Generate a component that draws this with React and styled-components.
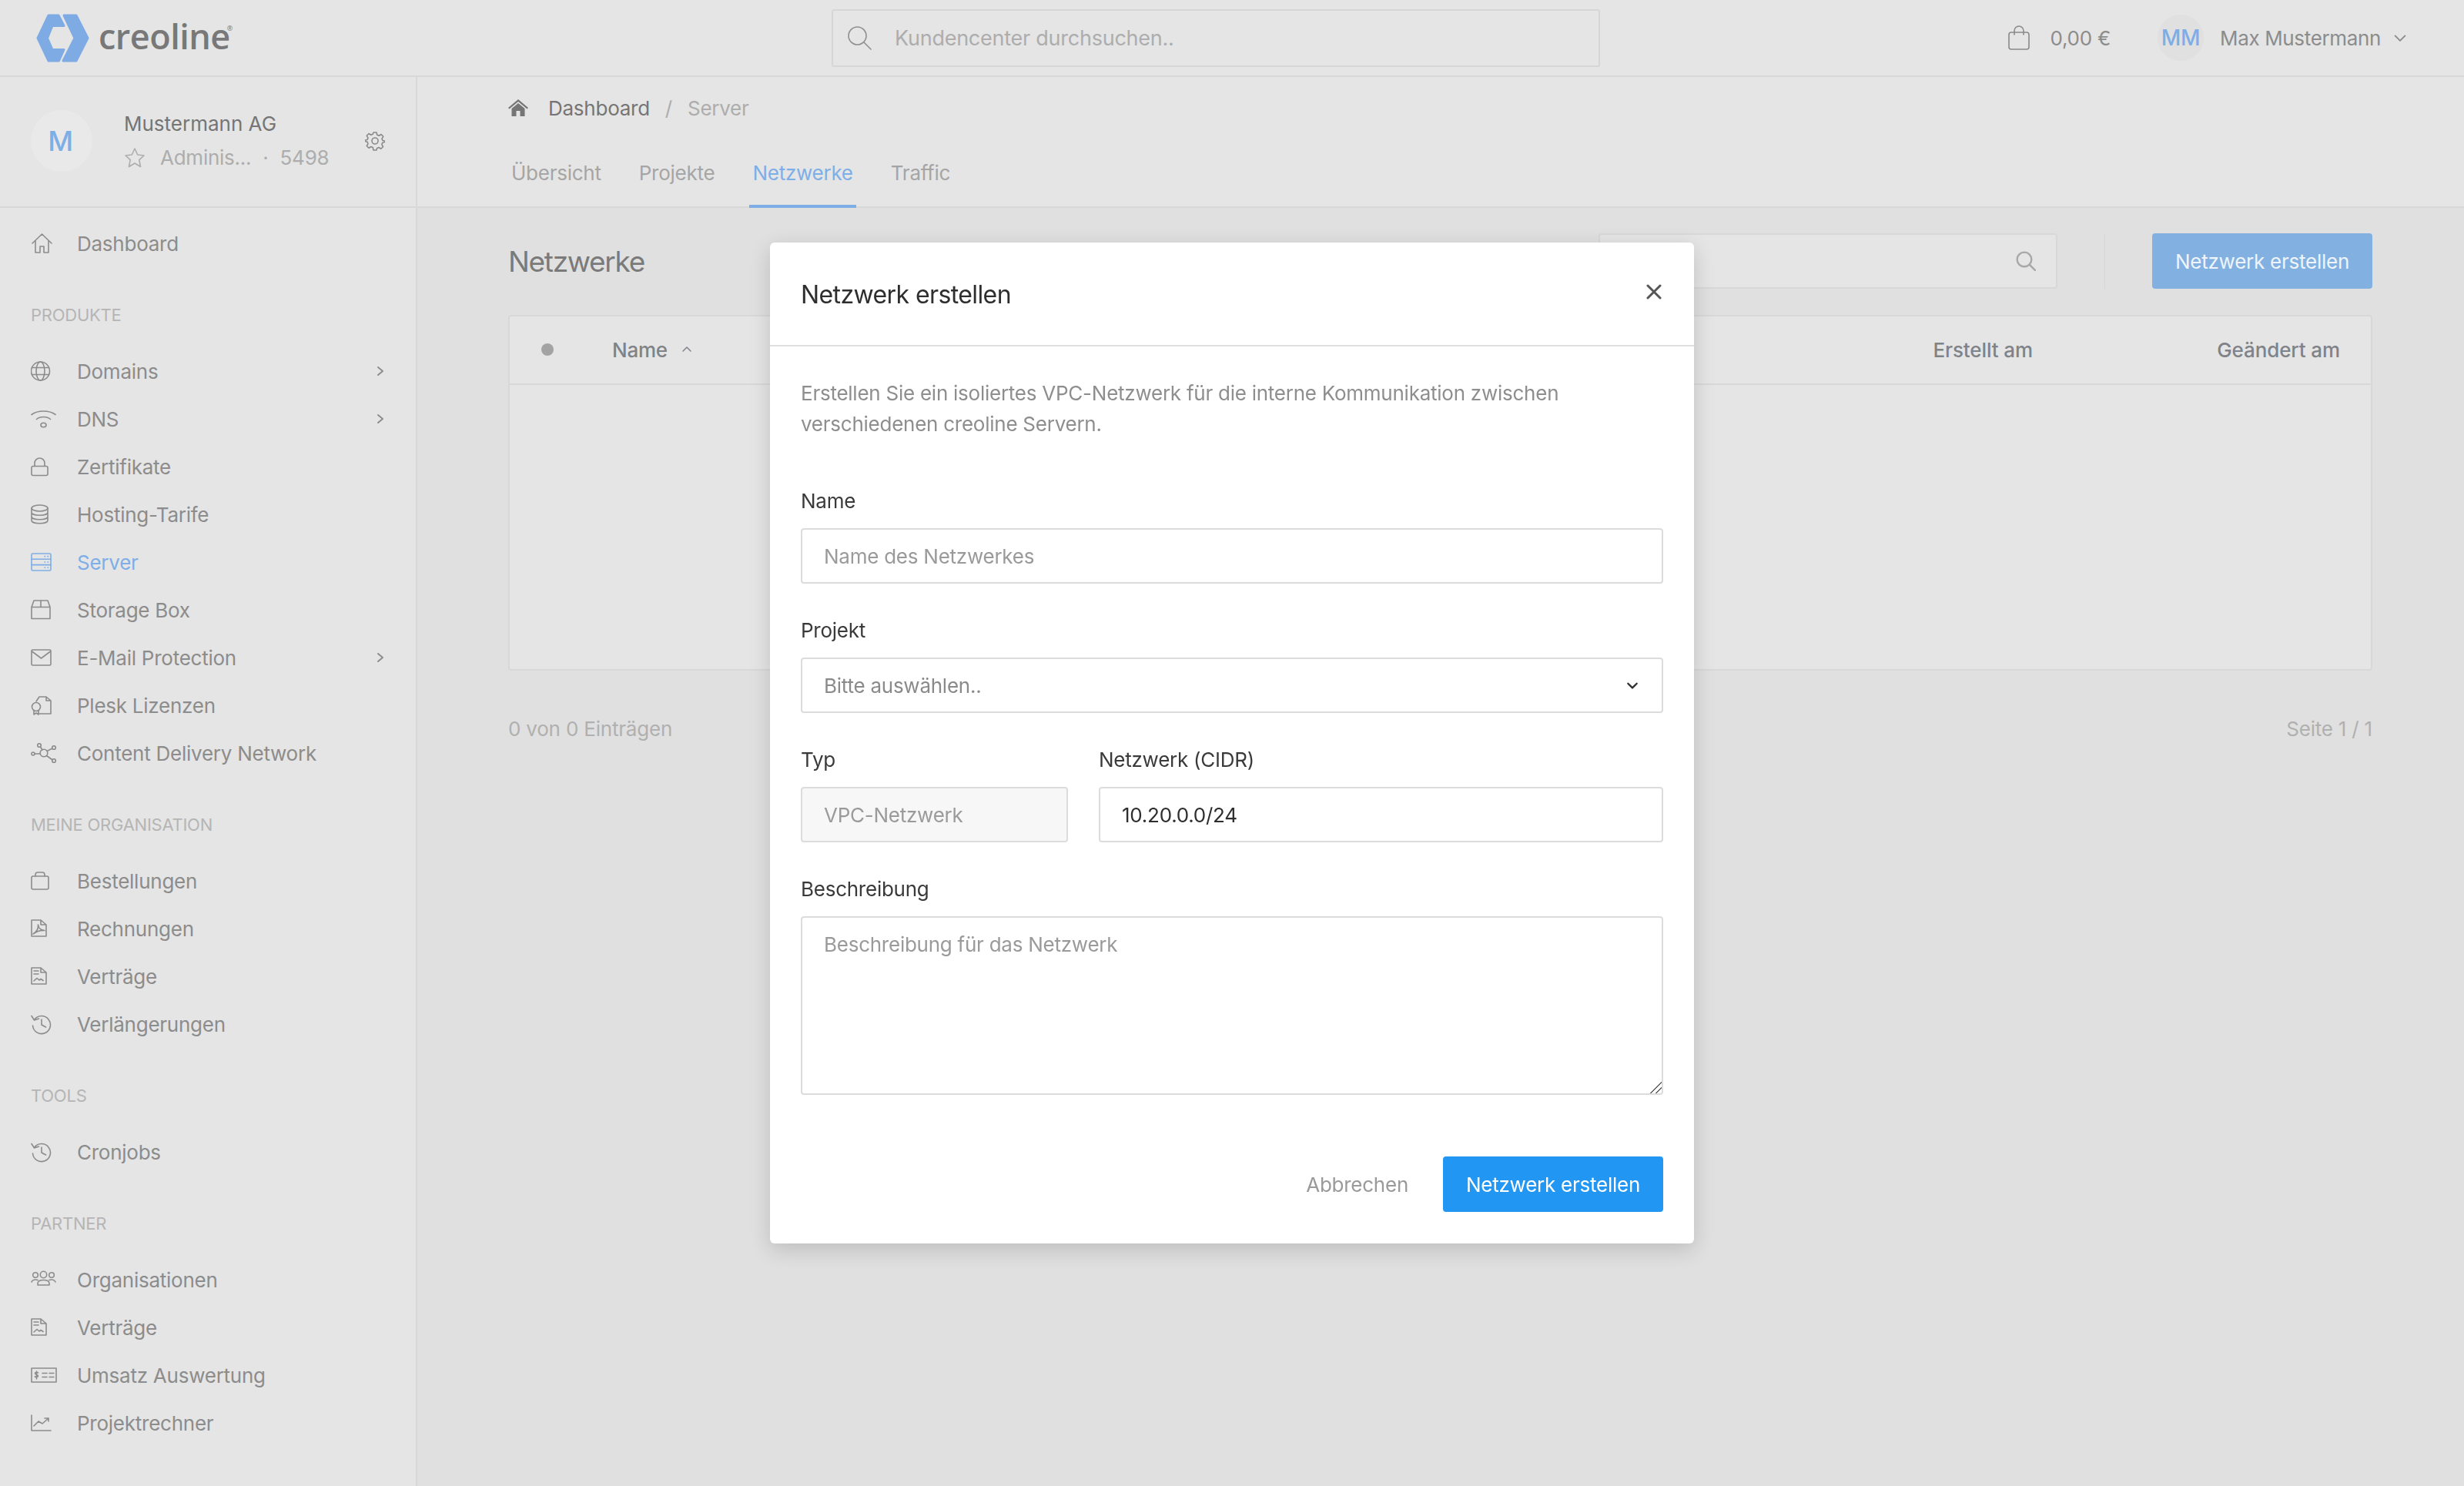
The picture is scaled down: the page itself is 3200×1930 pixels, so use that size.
import React from "react";
import styled, { createGlobalStyle } from "styled-components";

const GlobalStyle = createGlobalStyle`
  * { box-sizing: border-box; }
  html, body { margin: 0; height: 100%; }
  body {
    font-family: Inter, "Liberation Sans", sans-serif;
    font-size: 26px;
    letter-spacing: -0.25px;
    color: #8a8a8a;
    background: #e0e0e0;
    overflow: hidden;
  }
`;

const Page = styled.div`
  height: 100vh;
  display: flex;
  flex-direction: column;
`;

/* top bar */
const TopBar = styled.header`
  height: 100px;
  flex: none;
  display: flex;
  align-items: center;
  background: #e5e5e5;
  border-bottom: 2px solid #d8d8d8;
  padding-right: 74px;
`;
const Brand = styled.div`
  width: 1080px;
  flex: none;
  display: flex;
  align-items: center;
  gap: 12px;
  padding-left: 47px;
`;
const BrandName = styled.span`
  font-family: "Open Sans", sans-serif;
  font-weight: 600;
  font-size: 45px;
  line-height: 60px;
  margin-bottom: 5px;
  color: #787878;
  letter-spacing: -0.5px;
  sup {
    font-size: 9px;
    font-weight: 400;
    vertical-align: 24px;
    line-height: 0;
    margin-left: -4px;
  }
`;
const GlobalSearch = styled.div`
  width: 998px;
  height: 75px;
  display: flex;
  align-items: center;
  gap: 30px;
  padding-left: 18px;
  color: #8f8f8f;
  border: 2px solid #d6d6d6;
  border-radius: 3px;
`;
const Muted = styled.span`
  color: #adadad;
  font-size: 27px;
  margin-top: 1px;
`;
const TopRight = styled.div`
  margin-left: auto;
  display: flex;
  align-items: center;
`;
const Amount = styled.span`
  margin-left: 26px;
  margin-right: 61px;
  color: #8c8c8c;
`;
const UserBadge = styled.div`
  width: 60px;
  height: 60px;
  border-radius: 50%;
  background: #e0e0e0;
  color: #7eaee6;
  display: flex;
  align-items: center;
  justify-content: center;
  font-weight: 500;
  font-size: 28px;
`;
const UserName = styled.span`
  margin: 0 16px 0 21px;
  color: #8c8c8c;
  letter-spacing: -0.35px;
`;

/* layout below the bar */
const Body = styled.div`
  flex: 1;
  display: flex;
  min-height: 0;
`;
const Sidebar = styled.aside`
  width: 542px;
  flex: none;
  background: #e5e5e5;
  border-right: 2px solid #d8d8d8;
`;
const Account = styled.div`
  height: 170px;
  display: flex;
  align-items: center;
  padding: 0 40px 2px;
  border-bottom: 2px solid #d8d8d8;
`;
const Avatar = styled.div`
  width: 80px;
  height: 80px;
  flex: none;
  border-radius: 50%;
  background: #e9e9e9;
  color: #7eaee6;
  display: flex;
  align-items: center;
  justify-content: center;
  font-size: 36px;
  font-weight: 500;
  padding-right: 3px;
`;
const AccountText = styled.div`
  margin-left: 41px;
  flex: 1;
  display: flex;
  flex-direction: column;
  gap: 12px;
`;
const AccountName = styled.div`
  color: #757575;
  line-height: 32px;
  letter-spacing: 0;
`;
const AccountMeta = styled.div`
  display: flex;
  align-items: center;
  color: #adadad;
  line-height: 32px;
  gap: 15px;
  svg { margin-right: 4px; }
`;
const Nav = styled.nav`
  padding-top: 15px;
`;
const SectionLabel = styled.div`
  margin: 50px 0 30px 40px;
  font-size: 22px;
  line-height: 24px;
  color: #b5b5b5;
`;
const NavRow = styled.div`
  height: 62px;
  display: flex;
  align-items: center;
  padding: 0 40px;
  color: ${(p) => (p.$active ? "#7eaee6" : "#8c8c8c")};
`;
const NavIcon = styled.span`
  width: 60px;
  flex: none;
  display: flex;
`;
const NavText = styled.span`
  flex: 1;
`;

const Main = styled.main`
  flex: 1;
  min-width: 0;
`;
const MainHead = styled.div`
  height: 170px;
  background: #e5e5e5;
  border-bottom: 2px solid #d8d8d8;
  padding: 22px 0 0 118px;
`;
const Breadcrumb = styled.div`
  height: 36px;
  display: flex;
  align-items: center;
  color: #757575;
`;
const Crumb = styled.span`
  color: ${(p) => (p.$current ? "#adadad" : "#757575")};
  margin-left: ${(p) => p.$gap}px;
`;
const Tabs = styled.div`
  display: flex;
  gap: 41px;
  margin-top: 24px;
  height: 88px;
`;
const Tab = styled.div`
  height: 88px;
  padding: 0 4px;
  line-height: 86px;
  color: ${(p) => (p.$active ? "#7eaee6" : "#a5a5a5")};
  border-bottom: 4px solid ${(p) => (p.$active ? "#7eaee6" : "transparent")};
`;
const Content = styled.div`
  padding: 33px 119px 0 118px;
`;
const Toolbar = styled.div`
  height: 72px;
  display: flex;
  align-items: center;
`;
const Title = styled.h1`
  flex: 1;
  margin: 0;
  font-size: 37px;
  letter-spacing: -1.3px;
  font-weight: 400;
  color: #7a7a7a;
`;
const TableSearch = styled.div`
  width: 596px;
  height: 72px;
  display: flex;
  align-items: center;
  justify-content: flex-end;
  padding-right: 26px;
  color: #a8a8a8;
  background: #e5e5e5;
  border: 2px solid #d8d8d8;
  border-radius: 4px;
`;
const VLine = styled.div`
  width: 1px;
  height: 72px;
  margin: 0 61px;
  background: #d6d6d6;
`;
const GhostButton = styled.div`
  width: 286px;
  height: 72px;
  display: flex;
  align-items: center;
  justify-content: center;
  border-radius: 4px;
  background: #82b1e1;
  color: #eef4fa;
`;
const Table = styled.div`
  margin-top: 34px;
  height: 462px;
  background: #e5e5e5;
  border: 2px solid #d8d8d8;
  border-radius: 4px;
`;
const TableHead = styled.div`
  height: 90px;
  display: grid;
  grid-template-columns: 92px 1fr 280px 399px;
  align-items: center;
  padding: 0 40px 0 41px;
  border-bottom: 2px solid #d8d8d8;
  color: #7f8388;
  font-weight: 500;
  margin-top: -1px;
`;
const Dot = styled.div`
  width: 16px;
  height: 16px;
  border-radius: 50%;
  background: #a3a3a3;
`;
const NameCell = styled.div`
  display: flex;
  align-items: center;
  gap: 18px;
`;
const RightCell = styled.div`
  text-align: right;
  letter-spacing: -0.1px;
`;
const TableFoot = styled.div`
  display: flex;
  justify-content: space-between;
  margin-top: 60px;
  line-height: 32px;
  color: #b0b0b0;
  letter-spacing: -0.2px;
`;

/* dialog */
const Overlay = styled.div`
  position: fixed;
  inset: 0;
  display: flex;
  align-items: center;
  justify-content: center;
`;
const Dialog = styled.div`
  width: 1200px;
  height: 1300px;
  background: #fff;
  border-radius: 6px;
  box-shadow: 0 8px 28px rgba(0, 0, 0, 0.16);
  color: #2e2e2e;
`;
const DialogHead = styled.div`
  height: 135px;
  display: flex;
  justify-content: space-between;
  padding: 0 40px 0 40px;
  border-bottom: 2px solid #dedede;
`;
const DialogTitle = styled.h2`
  margin: 48px 0 0;
  font-size: 32px;
  letter-spacing: -0.6px;
  line-height: 40px;
  font-weight: 400;
  color: #2e2e2e;
`;
const Close = styled.span`
  display: flex;
  margin-top: 54px;
  margin-right: 2px;
  color: #555;
`;
const DialogBody = styled.div`
  padding: 41px 40px 0;
`;
const Intro = styled.p`
  margin: 0 0 64px;
  line-height: 40px;
  color: #8e8e8e;
`;
const Field = styled.div`
  margin-bottom: 45px;
  flex: ${(p) => p.$flex || "none"};
  width: ${(p) => (p.$width ? `${p.$width}px` : "auto")};
`;
const Label = styled.label`
  display: block;
  line-height: 32px;
  margin-bottom: 19px;
  color: #3a3a3a;
`;
const inputCss = `
  display: block;
  width: 100%;
  font: inherit;
  letter-spacing: inherit;
  outline: none;
  padding: 0 28px;
  border: 2px solid #dcdcdc;
  border-radius: 4px;
  color: #2e2e2e;
  background: #fff;
  &::placeholder { color: #9a9a9a; opacity: 1; }
`;
const TextInput = styled.input`
  ${inputCss}
  height: 72px;
  &:disabled { background: #f7f7f7; color: #9a9a9a; -webkit-text-fill-color: #9a9a9a; opacity: 1; }
`;
const SelectBox = styled.div`
  height: 72px;
  display: flex;
  align-items: center;
  justify-content: space-between;
  padding: 0 30px 0 28px;
  border: 2px solid #dcdcdc;
  border-radius: 4px;
  color: #8a8a8a;
`;
const SelectArrow = styled.span`
  display: flex;
  color: #2e2e2e;
`;
const TwoCols = styled.div`
  display: flex;
  gap: 40px;
`;
const TextArea = styled.textarea`
  ${inputCss}
  height: 232px;
  padding: 19px 28px;
  line-height: 32px;
  resize: vertical;
  &::-webkit-resizer {
    background: linear-gradient(135deg, transparent 48%, #666 48%, #666 54%, transparent 54%, transparent 72%, #666 72%, #666 78%, transparent 78%);
  }
`;
const DialogFoot = styled.div`
  display: flex;
  justify-content: flex-end;
  align-items: center;
  gap: 45px;
  margin-top: 80px;
`;
const CancelLink = styled.span`
  color: #9a9a9a;
`;
const PrimaryButton = styled.button`
  width: 286px;
  height: 72px;
  border: none;
  border-radius: 4px;
  font: inherit;
  letter-spacing: inherit;
  background: #2196f3;
  color: #fff;
`;

/* icons */
const Glyph = styled.svg`
  display: block;
  fill: none;
  stroke: currentColor;
  stroke-width: ${(p) => p.$sw || 1.6};
  stroke-linecap: round;
  stroke-linejoin: round;
`;
const Ico = ({ children, w = 34, h = 28, sw, vb }) => (
  <Glyph width={w} height={h} viewBox={vb || `0 0 ${w} ${h}`} $sw={sw}>
    {children}
  </Glyph>
);

const HomeIcon = () => <Ico><path d="M2 14 14.5 2 27 14M6 10.5V26h6v-8h5v8h6V10.5" /></Ico>;
const GlobeIcon = () => <Ico><circle cx="12.5" cy="14" r="12" /><ellipse cx="12.5" cy="14" rx="5.5" ry="12" /><path d="M1.5 9.5h22M1.5 18.5h22" /></Ico>;
const WifiIcon = () => <Ico><path d="M1 8.500C9 2.500 24 2.500 32 8.500M7.500 14.500C12 10.500 21 10.500 25.500 14.500" /><ellipse cx="16.500" cy="22" rx="3.500" ry="2.800" /></Ico>;
const LockIcon = () => <Ico><rect x="1" y="13.500" width="21" height="12" rx="2" /><path d="M5 13.500V9.500a6.500 6.500 0 0 1 13 0v4" /></Ico>;
const DbIcon = () => <Ico><ellipse cx="11.500" cy="6" rx="10.500" ry="4" /><path d="M1 6v16c0 5 21 5 21 0V6M1 11.500c0 5 21 5 21 0M1 17c0 5 21 5 21 0" /></Ico>;
const ServerIcon = () => <Ico><rect x="1" y="3" width="25" height="22" rx="1.500" /><path d="M1 10.300h25M1 17.600h25M18 6.600h.6M22 6.600h.6M18 14h.6M22 14h.6M18 21.300h.6M22 21.300h.6" /></Ico>;
const BoxIcon = () => <Ico><path d="M1 10.500 4 2h18l3 8.500V25.500H1zM1 10.500h24M13 2v8.500" /></Ico>;
const MailIcon = () => <Ico><rect x="1" y="4" width="25" height="20" rx="1.500" /><path d="M1.500 6 13.500 15 25.500 6" /></Ico>;
const PleskIcon = () => <Ico><path d="M7 9 11 3h9l6 5v17H10M20 3v5h6" /><circle cx="7" cy="16" r="5.500" /><path d="M4 21v5l3-2 3 2v-5" /></Ico>;
const CdnIcon = () => (
  <Ico>
    <circle cx="17" cy="14" r="4.800" /><circle cx="11" cy="4" r="2.300" /><circle cx="30" cy="7" r="2.300" />
    <circle cx="3" cy="15" r="2" /><circle cx="30" cy="24" r="2.300" />
    <path d="M12.500 6 15 10M21 11.500 28 8M5 15h7M20.500 17.500 28.200 23" />
  </Ico>
);
const BagIcon = () => <Ico><rect x="1" y="8" width="22" height="17" rx="2" /><path d="M6 8V6a3 3 0 0 1 3-3h6a3 3 0 0 1 3 3v2" /></Ico>;
const PdfIcon = () => <Ico><path d="M1 3h12l7 6v15H1zM13 3v6h7" /><path d="M3 21c5-3 7-8 6.500-12 .5 4 3.500 7 8.500 7.500-5-.5-10 1-15 4.500z" /></Ico>;
const DocIcon = () => <Ico><path d="M1 3h12l7 6v15H1zM13 3v6h7M4 7h6M4 11h6M4 20l4-3.500 3 2.500 2-1.500 3 2" /></Ico>;
const HistoryIcon = () => <Ico><path d="M4.500 8.500a11.500 11.500 0 1 1-2 7.500M1 3.500l3.500 5.500 6-2M14 8v7l5.500 3" /></Ico>;
const TeamIcon = () => (
  <Ico>
    <circle cx="6" cy="8" r="3.300" /><circle cx="16.500" cy="7.500" r="4.200" /><circle cx="27" cy="8" r="3.300" />
    <path d="M1 17c1-3 5-3.500 8-2.500M32 17c-1-3-5-3.500-8-2.500M9 21v-2c0-3 3-4.500 7.500-4.500S24 16 24 19v2z" />
  </Ico>
);
const BillIcon = () => (
  <Ico>
    <rect x="1" y="5" width="32" height="18" />
    <path d="M15 11.500h6M24 11.500h6M15 16.500h6M24 16.500h6M9.500 11c-1-1-4-1-4 .8s4 1.400 4 3.200-3 1.800-4.200.8M7.500 9v10" />
  </Ico>
);
const ChartIcon = () => <Ico><path d="M1 4v20h25M4 18l6-6 5 3 8-7M18 8h5v4" /></Ico>;

const Chevron = ({ dir = "right", size = 14, sw = 2 }) => {
  const d = { right: "M5 2l6 5-6 5", down: "M2 5l5 5 5-5", up: "M2 9l5-5 5 5" }[dir];
  return <Ico w={size} h={size} vb="0 0 14 14" sw={sw}><path d={d} /></Ico>;
};
const SearchIcon = ({ size = 32, sw = 1.6 }) => (
  <Ico w={size} h={size} vb="0 0 32 32" sw={sw}><circle cx="13.500" cy="13.500" r="11.500" /><path d="M22 22l9 9" /></Ico>
);

const Logo = () => (
  <svg width="69" height="63" viewBox="0 0 69 63" fill="#7fabe4" stroke="#7fabe4" strokeWidth="3" strokeLinejoin="round">
    <path d="M16 2h13l7 13.500H21L14.500 31.500 21 46.500h15L29.500 61H16L2 31.500z" />
    <path d="M36 2h16l15 29.500L52 61H35l15-29.500z" />
  </svg>
);

const productItems = [
  [GlobeIcon, "Domains", true],
  [WifiIcon, "DNS", true],
  [LockIcon, "Zertifikate"],
  [DbIcon, "Hosting-Tarife"],
  [ServerIcon, "Server", false, true],
  [BoxIcon, "Storage Box"],
  [MailIcon, "E-Mail Protection", true],
  [PleskIcon, "Plesk Lizenzen"],
  [CdnIcon, "Content Delivery Network"],
];
const orgItems = [
  [BagIcon, "Bestellungen"],
  [PdfIcon, "Rechnungen"],
  [DocIcon, "Verträge"],
  [HistoryIcon, "Verlängerungen"],
];
const toolItems = [[HistoryIcon, "Cronjobs"]];
const partnerItems = [
  [TeamIcon, "Organisationen"],
  [DocIcon, "Verträge"],
  [BillIcon, "Umsatz Auswertung"],
  [ChartIcon, "Projektrechner"],
];

function NavList({ items }) {
  return items.map(([Icon, label, more, active]) => (
    <NavRow key={label} $active={active}>
      <NavIcon><Icon /></NavIcon>
      <NavText>{label}</NavText>
      {more && <Chevron />}
    </NavRow>
  ));
}

export default function App() {
  return (
    <Page>
      <GlobalStyle />
      <TopBar>
        <Brand>
          <Logo />
          <BrandName>creoline<sup>®</sup></BrandName>
        </Brand>
        <GlobalSearch>
          <SearchIcon />
          <Muted>Kundencenter durchsuchen..</Muted>
        </GlobalSearch>
        <TopRight>
          <Ico w={28} h={32} vb="0 0 28 32"><rect x="1" y="9" width="26" height="22" rx="3" /><path d="M8 12V7a6 6 0 0 1 12 0v5" /></Ico>
          <Amount>0,00 €</Amount>
          <UserBadge>MM</UserBadge>
          <UserName>Max Mustermann</UserName>
          <Chevron dir="down" size={18} sw={1.4} />
        </TopRight>
      </TopBar>
      <Body>
        <Sidebar>
          <Account>
            <Avatar>M</Avatar>
            <AccountText>
              <AccountName>Mustermann AG</AccountName>
              <AccountMeta>
                <Ico w={28} h={28}><path d="M14 2l3.700 8 8.300 1-6.200 5.700 1.700 8.800L14 21l-7.500 4.500 1.700-8.800L2 11l8.300-1z" /></Ico>
                <span>Adminis...</span>
                <span>·</span>
                <span>5498</span>
              </AccountMeta>
            </AccountText>
            <Ico w={26} h={26}>
              <circle cx="13" cy="13" r="4" />
              <path d="M11 2h4l.8 3.200 2.400 1 2.800-1.700 2.700 2.800-1.700 2.800 1 2.400L26 13v1.500l-3.200.8-1 2.400 1.700 2.800-2.700 2.700-2.800-1.700-2.400 1L15 25h-4l-.8-3.500-2.400-1-2.800 1.700-2.700-2.700 1.700-2.800-1-2.400L0 13.500V12l3-.5 1-2.400-1.700-2.800L5 3.500l2.800 1.700 2.400-1z" />
            </Ico>
          </Account>
          <Nav>
            <NavRow>
              <NavIcon><HomeIcon /></NavIcon>
              <NavText>Dashboard</NavText>
            </NavRow>
            <SectionLabel>PRODUKTE</SectionLabel>
            <NavList items={productItems} />
            <SectionLabel>MEINE ORGANISATION</SectionLabel>
            <NavList items={orgItems} />
            <SectionLabel>TOOLS</SectionLabel>
            <NavList items={toolItems} />
            <SectionLabel>PARTNER</SectionLabel>
            <NavList items={partnerItems} />
          </Nav>
        </Sidebar>
        <Main>
          <MainHead>
            <Breadcrumb>
              <svg width="26" height="22" viewBox="0 0 26 22" fill="#757575">
                <path d="M13 0 26 11l-1.500 1.500L13 3 1.500 12.500 0 11zM4.500 12 13 5l8.500 7v10H15.500v-7h-5v7H4.500z" />
              </svg>
              <Crumb $gap={26}>Dashboard</Crumb>
              <Crumb $gap={20} $current>/</Crumb>
              <Crumb $gap={20} $current>Server</Crumb>
            </Breadcrumb>
            <Tabs>
              <Tab>Übersicht</Tab>
              <Tab>Projekte</Tab>
              <Tab $active>Netzwerke</Tab>
              <Tab>Traffic</Tab>
            </Tabs>
          </MainHead>
          <Content>
            <Toolbar>
              <Title>Netzwerke</Title>
              <TableSearch><SearchIcon size={26} sw={3} /></TableSearch>
              <VLine />
              <GhostButton>Netzwerk erstellen</GhostButton>
            </Toolbar>
            <Table>
              <TableHead>
                <Dot />
                <NameCell>Name <Chevron dir="up" size={14} sw={1.5} /></NameCell>
                <RightCell>Erstellt am</RightCell>
                <RightCell>Geändert am</RightCell>
              </TableHead>
            </Table>
            <TableFoot>
              <span>0 von 0 Einträgen</span>
              <span>Seite 1 / 1</span>
            </TableFoot>
          </Content>
        </Main>
      </Body>
      <Overlay>
        <Dialog>
          <DialogHead>
            <DialogTitle>Netzwerk erstellen</DialogTitle>
            <Close>
              <Ico w={20} h={20} sw={3}><path d="M2 2l16 16M18 2 2 18" /></Ico>
            </Close>
          </DialogHead>
          <DialogBody>
            <Intro>
              Erstellen Sie ein isoliertes VPC-Netzwerk für die interne Kommunikation zwischen
              <br />
              verschiedenen creoline Servern.
            </Intro>
            <Field>
              <Label>Name</Label>
              <TextInput placeholder="Name des Netzwerkes" readOnly />
            </Field>
            <Field>
              <Label>Projekt</Label>
              <SelectBox>
                <span>Bitte auswählen..</span>
                <SelectArrow><Chevron dir="down" size={16} sw={2} /></SelectArrow>
              </SelectBox>
            </Field>
            <TwoCols>
              <Field $width={347}>
                <Label>Typ</Label>
                <TextInput defaultValue="VPC-Netzwerk" disabled />
              </Field>
              <Field $flex="1">
                <Label>Netzwerk (CIDR)</Label>
                <TextInput defaultValue="10.20.0.0/24" readOnly />
              </Field>
            </TwoCols>
            <Field>
              <Label>Beschreibung</Label>
              <TextArea placeholder="Beschreibung für das Netzwerk" readOnly />
            </Field>
            <DialogFoot>
              <CancelLink>Abbrechen</CancelLink>
              <PrimaryButton>Netzwerk erstellen</PrimaryButton>
            </DialogFoot>
          </DialogBody>
        </Dialog>
      </Overlay>
    </Page>
  );
}
